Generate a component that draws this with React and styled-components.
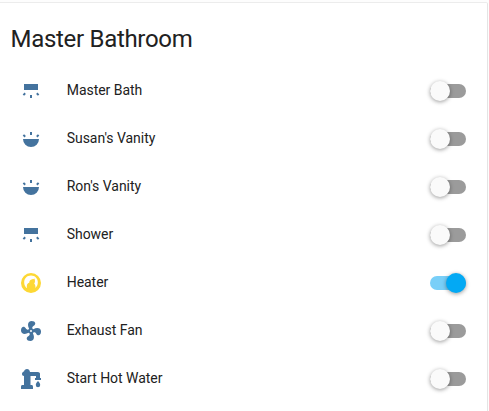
import React from "react";
import styled, { createGlobalStyle } from "styled-components";

const GlobalStyle = createGlobalStyle`
  * { box-sizing: border-box; }
  body { margin: 0; background: #fdfdfd; font-family: Roboto, sans-serif; color: #212121; overflow: hidden; }
`;

const Card = styled.section`
  width: 488px;
  height: 411px;
  margin-top: 2px;
  padding: 14px 21px 0 11px;
  background: #fff;
  border-top: 1px solid #ececec;
  border-right: 1px solid #e4e4e4;
  border-top-right-radius: 2px;
`;

const Title = styled.h1`
  margin: 0 0 0 -0.4px;
  height: 49px;
  font-size: 24px;
  font-weight: 400;
  line-height: 44px;
  letter-spacing: -0.31px;
`;

const Row = styled.div`
  display: flex;
  align-items: center;
  height: 48px;
  padding-left: 8px;
`;

const Icon = styled.svg`
  width: 24px;
  height: 24px;
  margin-right: 23.7px;
  margin-top: 2px;
  fill: ${(p) => (p.$on ? "#fdd835" : "#44739e")};
`;

const Label = styled.span`
  flex: 1;
  font-size: 14px;
  line-height: 20px;
  letter-spacing: -0.03px;
`;

const Switch = styled.button`
  display: flex;
  align-items: center;
  justify-content: ${(p) => (p.$on ? "flex-end" : "flex-start")};
  width: 36px;
  height: 14px;
  margin-top: 2px;
  padding: 0;
  border: 0;
  border-radius: 7px;
  background: ${(p) => (p.$on ? "#79cff8" : "#9b9b9b")};
`;

const Knob = styled.span`
  flex: none;
  width: 20px;
  height: 20px;
  border-radius: 50%;
  background: ${(p) => (p.$on ? "#03a9f4" : "#fafafa")};
  box-shadow: 0 1px 4px rgba(0, 0, 0, 0.4);
`;

const ICONS = {
  flat: "M5 5H19V11H5ZM11 16H13V19H11ZM5.5 13.6L6.9 15L5.1 16.8L3.7 15.4ZM18.5 13.6L20.3 15.4L18.9 16.8L17.1 15Z",
  round: "M4 12H20A8 8 0 0 1 4 12ZM11 5H13V8H11ZM5.1 7.2L6.9 9L5.5 10.4L3.7 8.6ZM18.9 7.2L20.3 8.6L18.5 10.4L17.1 9Z",
  heater:
    "M12 2A10 10 0 1 0 12 22A10 10 0 1 0 12 2ZM12 4.6C16 4.6 18.8 7.5 18.8 11.3C18.8 13.7 18 15.7 16.3 17C16.7 15.4 16.4 13.8 15.2 12.8C16.2 11.5 16.3 9.5 15.4 7.6C14.4 8.3 13.6 8.3 12.5 8.6C10.9 9 10.2 10.2 10.4 11.6C9.4 12 8.6 12.4 8.2 13.2C7.7 14.4 7.7 15.8 8.1 17.2C6.2 16 5.2 13.7 5.2 11.4C5.2 7.5 8 4.6 12 4.6Z",
  fan: "M12,11A1,1 0 0,0 11,12A1,1 0 0,0 12,13A1,1 0 0,0 13,12A1,1 0 0,0 12,11M12.5,2C17,2 17.11,5.57 14.75,6.75C13.76,7.24 13.32,8.29 13.13,9.22C13.61,9.42 14.03,9.73 14.35,10.13C18.05,8.13 22.03,8.92 22.03,12.5C22.03,17 18.46,17.1 17.28,14.73C16.78,13.74 15.72,13.3 14.79,13.11C14.59,13.59 14.28,14 13.88,14.34C15.87,18.03 15.08,22 11.5,22C7,22 6.91,18.42 9.27,17.24C10.25,16.75 10.69,15.71 10.89,14.79C10.4,14.59 9.97,14.27 9.65,13.87C5.96,15.85 2,15.07 2,11.5C2,7 5.56,6.89 6.74,9.26C7.24,10.25 8.29,10.68 9.22,10.87C9.41,10.39 9.73,9.97 10.14,9.65C8.15,5.96 8.94,2 12.5,2Z",
  pump: "M5 4.5C5.3 3 6.4 2 8 2C9.6 2 10.7 3 11 5H18.5C20.7 5 21 6 21 7V11H22V13H16V11H17V9H11.5V18H13C13.7 18 14 19 14 20V22H2V20C2 19 2.3 18 3 18H5V9C3.7 9 3 8.2 3 7C3 5.8 3.7 4.8 5 4.5ZM19 14C20.4 15.6 21.2 16.7 21.2 18A2.2 2.2 0 0 1 16.8 18C16.8 16.7 17.6 15.6 19 14Z",
};

const DEVICES = [
  { name: "Master Bath", icon: "flat" },
  { name: "Susan's Vanity", icon: "round" },
  { name: "Ron's Vanity", icon: "round" },
  { name: "Shower", icon: "flat" },
  { name: "Heater", icon: "heater", on: true },
  { name: "Exhaust Fan", icon: "fan" },
  { name: "Start Hot Water", icon: "pump" },
];

export default function App() {
  return (
    <>
      <GlobalStyle />
      <Card>
        <Title>Master Bathroom</Title>
        {DEVICES.map(({ name, icon, on }) => (
          <Row key={name}>
            <Icon viewBox="0 0 24 24" $on={on} aria-hidden="true">
              <path d={ICONS[icon]} />
            </Icon>
            <Label>{name}</Label>
            <Switch $on={on} role="switch" aria-checked={!!on} aria-label={name}>
              <Knob $on={on} />
            </Switch>
          </Row>
        ))}
      </Card>
    </>
  );
}
